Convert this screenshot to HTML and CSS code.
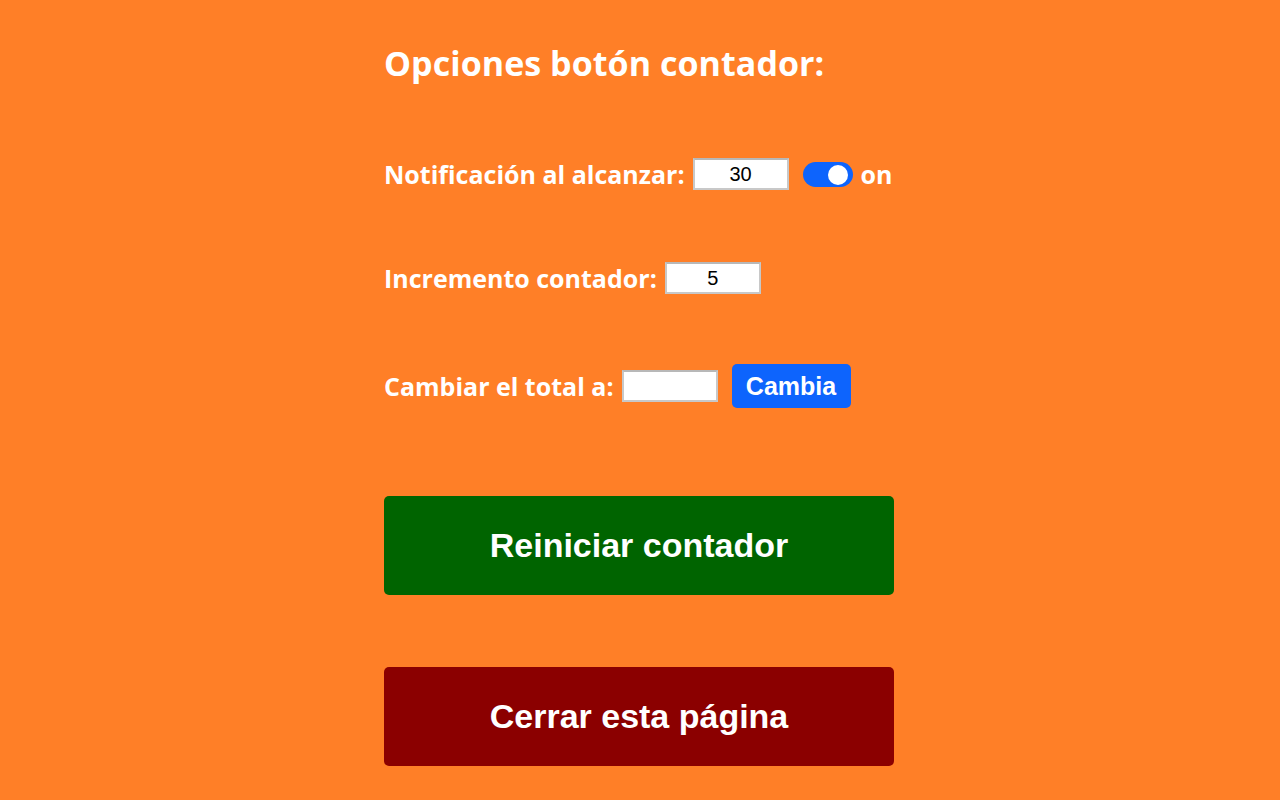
FILE: index.html
```html
<!DOCTYPE html>
<html lang="es">
<head>
<meta charset="utf-8">
<title>Opciones</title>
<link rel="stylesheet" href="styles.css">
</head>
<body>
<main class="panel">
  <h1 class="title">Opciones botón contador:</h1>
  <div class="row row-notify">
    <label class="label">Notificación al alcanzar:</label>
    <input class="num" type="text" value="30">
    <span class="switch"><span class="knob"></span></span>
    <span class="label">on</span>
  </div>
  <div class="row row-inc">
    <label class="label">Incremento contador:</label>
    <input class="num" type="text" value="5">
  </div>
  <div class="row row-total">
    <label class="label">Cambiar el total a:</label>
    <input class="num" type="text" value="">
    <button class="btn-small">Cambia</button>
  </div>
  <button class="btn-big btn-green">Reiniciar contador</button>
  <button class="btn-big btn-red">Cerrar esta página</button>
</main>
</body>
</html>
```
FILE: styles.css
```css
html, body {
  margin: 0;
  padding: 0;
  background: #ff7f27;
  height: 100%;
}
body {
  font-family: "Open Sans", "Noto Sans", sans-serif;
  color: #fff;
}
.panel {
  width: 512px;
  margin: 0 auto;
  padding-top: 39px;
  display: flex;
  flex-direction: column;
}
.title {
  margin: 0;
  font-size: 34px;
  font-weight: 700;
  line-height: 48px;
  letter-spacing: 0.05px;
}
.row {
  display: flex;
  align-items: center;
  height: 40px;
}
.row-notify { margin-top: 67px; }
.row-inc { margin-top: 64px; }
.row-total { margin-top: 68px; }
.label {
  font-size: 25px;
  font-weight: 700;
  white-space: nowrap;
}
.num {
  box-sizing: border-box;
  width: 96px;
  height: 32px;
  margin-left: 8px;
  border: 2px solid #c8c8c8;
  border-top-color: #b8b8b8;
  background: #fff;
  font-family: "Liberation Sans", Arial, sans-serif;
  font-size: 20px;
  text-align: center;
  color: #000;
  padding: 0;
}
.switch {
  position: relative;
  box-sizing: border-box;
  width: 50px;
  height: 25px;
  margin-left: 14px;
  margin-right: 8px;
  border-radius: 13px;
  background: #0d64fd;
}
.knob {
  position: absolute;
  right: 5px;
  top: 3px;
  width: 20px;
  height: 20px;
  border-radius: 50%;
  background: #fff;
}
.btn-small {
  margin-left: 14px;
  width: 119px;
  height: 44px;
  padding: 0;
  border: none;
  border-radius: 5px;
  background: #0d64fd;
  color: #fff;
  font-family: "Liberation Sans", Arial, sans-serif;
  font-weight: 700;
  font-size: 25px;
}
.btn-big {
  width: 510px;
  height: 99px;
  border: none;
  border-radius: 5px;
  color: #fff;
  font-family: "Liberation Sans", Arial, sans-serif;
  font-weight: 700;
  font-size: 34px;
  padding: 0;
}
.btn-green {
  margin-top: 90px;
  background: #006400;
}
.btn-red {
  margin-top: 72px;
  background: #8b0000;
}
```
